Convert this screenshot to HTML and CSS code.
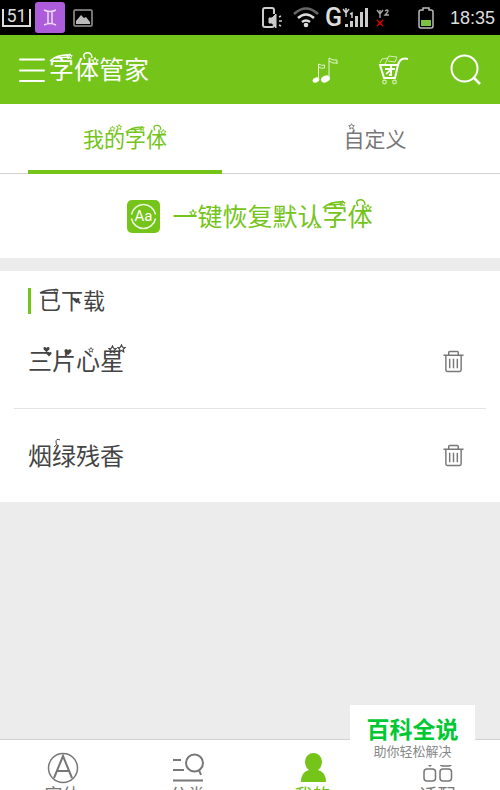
FILE: index.html
```html
<!DOCTYPE html>
<html lang="zh-CN">
<head>
<meta charset="utf-8">
<meta name="viewport" content="width=device-width, initial-scale=1">
<title>字体管家</title>
<link rel="stylesheet" href="styles.css">
</head>
<body>
<svg class="defs" aria-hidden="true">
  <symbol id="star" viewBox="0 0 10 10"><path d="M5 1l1.200 2.600 2.800.3-2.100 1.900.6 2.800L5 7.200 2.500 8.600l.6-2.800L1 3.900l2.800-.3z" fill="none" stroke="currentColor" stroke-width="1.300"/></symbol>
  <symbol id="heart" viewBox="0 0 10 10"><path d="M5 9L1 5C-.5 2.500 3 0 5 2.800 7 0 10.500 2.500 9 5z" fill="currentColor"/></symbol>
  <symbol id="ziti" viewBox="0 0 50 36"><path d="M1 11Q9 4 22 5M7 8l14-1M36 9q-3-5 1-6 6-1 6 5" fill="none" stroke="currentColor" stroke-width="1.500"/><use href="#star" x="17" y="3" width="7" height="7"/><use href="#star" x="42" y="7" width="8" height="8"/></symbol>
  <symbol id="trash" viewBox="0 0 22 24"><path d="M.5 5.500h21M6 5V2.500Q6 1.500 7 1.500h8q1 0 1 1V5M3 6v15q0 1.500 1.500 1.500h13Q19 22.500 19 21V6M7 9v10M11 9v10M15 9v10" fill="none" stroke="currentColor" stroke-width="1.500"/></symbol>
</svg>
<div class="app">
  <div class="status">
    <div class="status-group">
      <span class="charge">51</span>
      <svg class="zodiac" width="30" height="31" viewBox="0 0 30 31"><rect width="30" height="31" rx="3" fill="#ad5cdb"/><path d="M9 8q6 3 12 0M9 23q6-3 12 0M13 9v13M17 9v13" fill="none" stroke="#eadcf3" stroke-width="1.500"/></svg>
      <svg class="photo" width="20" height="18" viewBox="0 0 20 18"><rect x="1" y="1" width="18" height="16" rx="1" fill="none" stroke="#999" stroke-width="1.500"/><path d="M3 15v-3l5-6 3 3 2-1 4 5v2z" fill="#bbb"/></svg>
    </div>
    <div class="status-group">
      <svg width="22" height="24" viewBox="0 0 22 24"><path d="M13 8V4q0-2-2-2H4Q2 2 2 4v15q0 2 2 2h7q2 0 2-2" fill="none" stroke="#ccc" stroke-width="2"/><path d="M5 2h6M8 12h3l4-4v14l-4-5H8z" fill="#ccc" stroke="#ccc"/><path d="M18 11l2-1M18 15h3M18 19l2 1" stroke="#ccc" stroke-width="1.500"/></svg>
      <svg class="wifi" width="26" height="21" viewBox="0 0 26 21"><g fill="none" stroke-width="2.500"><path d="M1 7q12-11 24 0" stroke="#666"/><path d="M5 11q8-7 16 0M9 15q4-3 8 0" stroke="#ddd"/></g><circle cx="13" cy="18" r="2.300" fill="#ddd"/></svg>
      <span class="network">G</span>
      <svg class="signal" width="28" height="22" viewBox="0 0 28 22"><path d="M1 2l3 4 3-4M4 1v9M8 7l2-1v5" fill="none" stroke="#ccc" stroke-width="1.500"/><path d="M3 17h3v3H3zM8 14h3v6H8zM13 9h3v11h-3zM18 5h3v15h-3zM23 1h3v19h-3z" fill="#ccc"/></svg>
      <svg class="sim" width="14" height="20" viewBox="0 0 14 20"><path d="M1 2l3 4 3-4M4 2v8M9 3q3-2 3 0 0 1-3 4h4" fill="none" stroke="#aaa" stroke-width="1.300"/><path d="M1 12l6 6M7 12l-6 6" stroke="#e00000" stroke-width="1.500"/></svg>
      <svg class="battery" width="16" height="22" viewBox="0 0 16 22"><path d="M5 3V1h6v2h2q2 0 2 2v14q0 2-2 2H3q-2 0-2-2V5q0-2 2-2z" fill="none" stroke="#bbb" stroke-width="1.500"/><path d="M3 13h10v6H3z" fill="#78c344"/></svg>
      <time class="clock">18:35</time>
    </div>
  </div>
  <header class="header">
    <button class="menu" aria-label="菜单"><svg width="26" height="26" viewBox="0 0 26 26"><path d="M1 2.500h24M1 13.500h24M1 24h24" stroke="#fff" stroke-width="2" stroke-linecap="round"/></svg></button>
    <h1 class="title"><span class="label">字体管家<svg class="decor" width="50" height="36" aria-hidden="true"><use href="#ziti"/></svg></span></h1>
    <button class="tool" aria-label="音乐"><svg width="26" height="28" viewBox="0 0 26 28"><g fill="#fff"><ellipse cx="4" cy="24" rx="3.500" ry="2.500" transform="rotate(-25 4 24)"/><ellipse cx="13.500" cy="23" rx="4.600" ry="3.200" transform="rotate(-25 13.500 23)"/></g><path d="M6.500 24V8q3 2 6 1v3q-3 1-6-1M17 22V2q4 3 8 2v4M17 5q4 3 8 2" fill="none" stroke="#e4f5d0" stroke-width="1"/></svg></button>
    <button class="tool" aria-label="购物车"><svg width="32" height="30" viewBox="0 0 32 30"><path d="M20 10l-3 13H6L2 10h18q2-8 10-6" fill="none" stroke="#fff" stroke-width="2"/><path d="M7 14h10M13 11v9h-2M13 14q-2 3-5 5" fill="none" stroke="#fff" stroke-width="1.800"/><path d="M2 8l2-4 6-1-3 6M9 5l2-4 8 1-2 5-7-1" fill="none" stroke="#d5efb8" stroke-width="1"/><g fill="none" stroke="#d5efb8" stroke-width="1.200"><circle cx="6.500" cy="27" r="1.800"/><circle cx="16.500" cy="27" r="1.800"/></g></svg></button>
    <button class="tool" aria-label="搜索"><svg width="32" height="32" viewBox="0 0 32 32"><circle cx="14.500" cy="14.500" r="13" fill="none" stroke="#fff" stroke-width="2"/><path d="M24 24l6 6" stroke="#fff" stroke-width="2.500"/></svg></button>
  </header>
  <nav class="tabs">
    <a class="tab tab-active" href="#mine"><span class="label">我的字体<svg class="decor" viewBox="0 0 100 36" width="84" height="30" aria-hidden="true"><use href="#star" x="31" y="3" width="8" height="8"/><use href="#star" x="39" y="1" width="8" height="8"/><use href="#ziti" x="50" y="0" width="50" height="36"/></svg></span></a>
    <a class="tab" href="#custom"><span class="label">自定义<svg class="decor" width="62" height="30" aria-hidden="true"><use href="#star" x="4" y="0" width="7" height="7"/></svg></span></a>
  </nav>
  <button class="restore">
    <svg width="33" height="33" viewBox="0 0 33 33"><rect width="33" height="33" rx="5" fill="#74c419"/><path d="M4.500 14.500a12.200 12.200 0 0 1 24 0M4.500 18.500a12.200 12.200 0 0 0 24 0" fill="none" stroke="#edf8df" stroke-width="1.500"/><text class="aa" x="16.500" y="21" text-anchor="middle">Aa</text></svg>
    <span class="label">一键恢复默认字体<svg class="decor" width="200" height="36" aria-hidden="true"><use href="#star" x="17" y="12" width="8" height="8"/><use href="#star" x="141" y="25" width="7" height="7"/><use href="#ziti" x="150" y="0" width="50" height="36"/></svg></span>
  </button>
  <main class="downloads">
    <h2 class="heading"><span class="label">已下载<svg class="decor" width="66" height="26" aria-hidden="true"><path d="M1 5Q9 1 19 2" fill="none" stroke="currentColor" stroke-width="1.500"/><use href="#star" x="14" y="0" width="6" height="6"/><use href="#heart" x="34" y="9" width="7" height="7"/></svg></span></h2>
    <ul class="fonts">
      <li class="font">
        <span class="font-name label">三片心星<svg class="decor" width="100" height="36" aria-hidden="true"><use href="#heart" x="15" y="4" width="7" height="7"/><use href="#heart" x="18" y="9" width="6" height="6"/><use href="#heart" x="36" y="6" width="8" height="8"/><use href="#star" x="60" y="5" width="6" height="6"/><use href="#star" x="80" y="3" width="9" height="9"/><use href="#star" x="89" y="2" width="9" height="9"/></svg></span>
        <button class="delete" aria-label="删除三片心星"><svg width="21" height="23"><use href="#trash"/></svg></button>
      </li>
      <li class="font">
        <span class="font-name label">烟绿残香<svg class="decor" width="100" height="36" aria-hidden="true"><path d="M26 10q4-2 2-5 0-4 4-2" fill="none" stroke="currentColor" stroke-width="1"/></svg></span>
        <button class="delete" aria-label="删除烟绿残香"><svg width="21" height="23"><use href="#trash"/></svg></button>
      </li>
    </ul>
  </main>
  <nav class="bottom">
    <a class="dest" href="#fonts"><svg width="32" height="32" viewBox="0 0 32 32"><circle cx="16" cy="16" r="14.500" fill="none" stroke="currentColor" stroke-width="1.500"/><path d="M7 26l9-22 9 22M10 19h12" fill="none" stroke="currentColor" stroke-width="2"/></svg>字体</a>
    <a class="dest" href="#categories"><svg width="32" height="32" viewBox="0 0 32 32"><path d="M1 8h8M1 18h11M1 28.500h30M27 18l2 5" stroke="currentColor" stroke-width="2"/><circle cx="22.500" cy="11" r="8.500" fill="none" stroke="currentColor" stroke-width="2"/></svg>分类</a>
    <a class="dest dest-active" href="#me"><svg width="32" height="32" viewBox="0 0 32 32"><path d="M4 30q0-10 8-12Q8 15 8 9.500a8.500 8.500 0 0 1 17 0Q25 15 21 18q8 2 8 12z" fill="currentColor"/></svg>我的</a>
    <a class="dest" href="#match"><svg width="32" height="32" viewBox="0 0 32 32"><g fill="none" stroke="currentColor" stroke-width="1.500"><rect x="2" y="17" width="11.500" height="12" rx="3"/><rect x="18" y="17" width="11.500" height="12" rx="3"/><rect x="18" y="2" width="11.500" height="12" rx="3"/><path d="M8 14l-6-6 6-6 6 6z"/></g></svg>适配</a>
  </nav>
  <aside class="brand"><strong class="brand-name">百科全说</strong><span class="brand-note">助你轻松解决</span></aside>
</div>
</body>
</html>
```

FILE: styles.css
```css
* { box-sizing: border-box; }
body { margin: 0; font-family: "Noto Sans CJK SC", sans-serif; font-weight: 400; color: #444; background: #ececec; }
button { border: 0; padding: 0; background: none; font: inherit; color: inherit; }
a { color: inherit; text-decoration: none; }
svg { display: block; flex: none; }
.defs { position: absolute; width: 0; height: 0; }
.app { position: relative; display: flex; flex-direction: column; height: 100vh; overflow: hidden; }
.label { position: relative; }
.decor { position: absolute; left: 0; top: 0; }

.status { display: flex; justify-content: space-between; align-items: center; height: 35px; padding: 0 5px 0 2px; background: #000; color: #ddd; font-family: Roboto, sans-serif; }
.status-group { display: flex; align-items: center; }
.charge { width: 29px; height: 18px; border: 2px solid #ddd; border-top: 0; font-size: 18px; line-height: 14px; text-align: center; }
.zodiac { margin-left: 4px; }
.photo { margin-left: 8px; }
.wifi { margin-left: 10px; }
.network { margin-left: 6px; font-size: 25px; font-weight: 500; line-height: 30px; }
.sim { margin-left: 6px; }
.battery { margin-left: 28px; }
.clock { margin-left: 16px; font-family: "Liberation Sans", sans-serif; font-size: 18px; line-height: 30px; }

.header { display: flex; align-items: center; gap: 40px; height: 69px; padding: 0 18px 0 19px; background: #74c419; color: #fff; }
.title { flex: 1; margin: 0 0 0 -36px; padding-bottom: 4px; font-size: 25px; line-height: 32px; font-weight: 400; }

.tabs { display: flex; height: 70px; border-bottom: 1px solid #d2d2d2; background: #fff; }
.tab { flex: 1; display: flex; align-items: center; justify-content: center; margin: 0 28px -1px; padding-bottom: 2px; font-size: 21px; line-height: 30px; color: #777; }
.tab-active { border-bottom: 4px solid #74c419; padding: 2px 0 0; color: #74c419; }

.restore { display: flex; align-items: center; justify-content: center; gap: 12px; height: 84px; background: #fff; color: #74c419; font-size: 25px; line-height: 36px; }
.restore .label { padding-bottom: 2px; }
.aa { font: 400 15px Roboto, sans-serif; fill: #fff; }

.downloads { margin-top: 13px; padding-top: 17px; background: #fff; }
.heading { display: flex; margin: 0 28px; padding-left: 8px; border-left: 3px solid #74c419; font-size: 22px; line-height: 22px; font-weight: 400; height: 26px; }
.fonts { margin: 0 14px; padding: 0; list-style: none; }
.font { display: flex; align-items: center; justify-content: space-between; height: 94px; padding: 0 22px 0 14px; }
.font + .font { border-top: 1px solid #e4e4e4; }
.font-name { padding-bottom: 2px; font-size: 24px; line-height: 36px; }
.delete { color: #777; }

.bottom { display: flex; height: 51px; margin-top: auto; border-top: 1px solid #d2d2d2; background: #fff; overflow: hidden; }
.dest { flex: 1; display: flex; flex-direction: column; align-items: center; padding-top: 12px; font-size: 18px; line-height: 20px; color: #777; }
.dest-active { color: #74c419; }

.brand { position: absolute; right: 25px; bottom: 25px; width: 125px; height: 60px; padding-top: 9px; display: flex; flex-direction: column; align-items: center; background: #fff; }
.brand-name { font-size: 23px; line-height: 29px; font-weight: 700; color: #00c832; }
.brand-note { font-size: 13px; line-height: 16px; color: #888; }
```
